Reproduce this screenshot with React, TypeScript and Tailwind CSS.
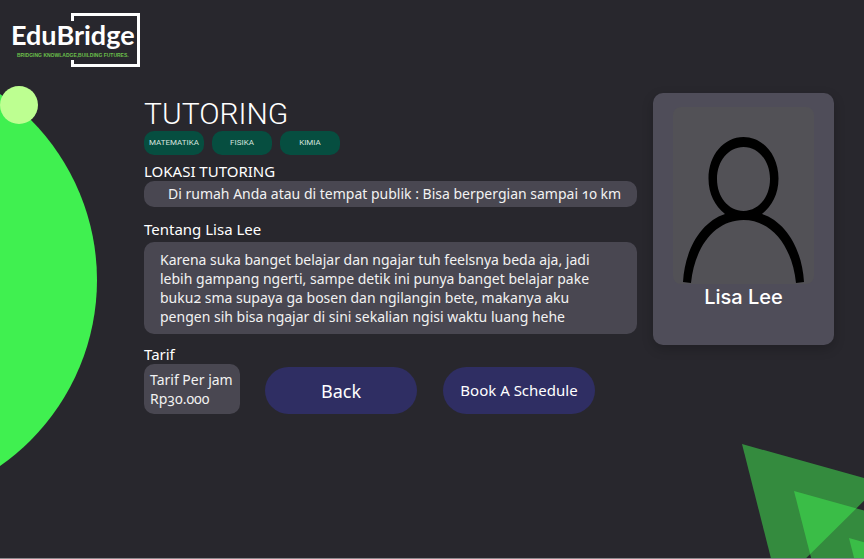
import React from "react";

const subjects = ["MATEMATIKA", "FISIKA", "KIMIA"];

function Logo() {
  return (
    <a href="#home" aria-label="EduBridge" className="relative block h-[54px] w-[129px]">
      <svg
        className="absolute inset-0 h-full w-full"
        viewBox="0 0 129 54"
        fill="none"
        stroke="#ffffff"
        strokeWidth="3"
        aria-hidden="true"
      >
        <path d="M61.500 8V1.500H127.500V52.500H61.500V47" />
      </svg>
      <span className="absolute left-0 top-2 font-['Lato',sans-serif] text-[27px] font-bold leading-[28px]">
        EduBridge
      </span>
      <span className="absolute left-[6px] top-[39px] whitespace-nowrap font-['Liberation_Sans',sans-serif] text-[5px] font-bold leading-[6px] text-[#6abf4b]">
        BRIDGING KNOWLADGE,BUILDING FUTURES.
      </span>
    </a>
  );
}

function Backdrop() {
  return (
    <div aria-hidden="true" className="pointer-events-none absolute inset-0 overflow-hidden">
      <div className="absolute -left-[357px] top-[53px] size-[454px] rounded-full bg-[#40f050]" />
      <div className="absolute left-0 top-[86px] size-[38px] rounded-full bg-[#bdff91]" />
      <svg
        className="absolute bottom-0 right-0"
        width="124"
        height="115"
        viewBox="740 443 124 115"
        fill="#40f050"
        fillOpacity="0.5"
      >
        <path d="M742 444L882 483L778 586Z" />
        <path d="M794 491L934 530L830 632Z" />
        <path d="M849 538L990 577L885 680Z" />
      </svg>
    </div>
  );
}

function ProfileCard() {
  return (
    <aside className="flex h-[252px] w-[181px] shrink-0 flex-col items-center rounded-[10px] bg-[#4f4d59] pt-[14px] shadow-[0_4px_12px_rgba(0,0,0,0.2)]">
      <div className="h-[177px] w-[141px] rounded-lg bg-[#525156]">
        <svg
          viewBox="0 0 141 177"
          className="h-full w-full"
          role="img"
          aria-label="Lisa Lee"
        >
          <path
            fill="#000000"
            fillRule="evenodd"
            d="M70.500 30C90 30 105.500 48 105.500 71.500C105.500 87 99 99 89 107C113 115 129 142 131 175L123 176C119 138 98 113 70.500 113C43 113 22 138 18 176L10 175C12 142 28 115 52 107C42 99 35.500 87 35.500 71.500C35.500 48 51 30 70.500 30ZM70.500 40C55.500 40 44 54 44 72C44 90 55.500 104 70.500 104C85.500 104 97 90 97 72C97 54 85.500 40 70.500 40Z"
          />
        </svg>
      </div>
      <h2 className="font-['Inter',sans-serif] text-xl font-medium leading-[26px]">Lisa Lee</h2>
    </aside>
  );
}

export default function App() {
  return (
    <div className="relative flex min-h-screen flex-col border-b border-[#8c8a8f] bg-[#28272d] font-['Noto_Sans',sans-serif] text-white">
      <Backdrop />
      <header className="relative pl-[11px] pt-[13px]">
        <Logo />
      </header>
      <main className="relative flex items-start gap-4 pl-36 pr-[30px] pt-[26px]">
        <div className="min-w-0 flex-1 text-sm oldstyle-nums">
          <h1 className="pt-1 font-['Roboto',sans-serif] text-[30px] font-light leading-[34px]">
            TUTORING
          </h1>
          <ul className="flex gap-2">
            {subjects.map((subject) => (
              <li
                key={subject}
                className="flex h-6 w-[60px] items-center justify-center rounded-[10px] bg-[#064e40] font-['Roboto',sans-serif] text-[8px] text-[#d5e3df]"
              >
                {subject}
              </li>
            ))}
          </ul>
          <section className="pt-[6px]">
            <h2 className="text-[15px] leading-5">LOKASI TUTORING</h2>
            <p className="rounded-[10px] bg-[#494751] pl-6 leading-[26px] text-[#f2f2f2]">
              Di rumah Anda atau di tempat publik : Bisa berpergian sampai 10 km
            </p>
          </section>
          <section className="pt-3">
            <h2 className="pb-[3px] text-[15px] leading-5">Tentang Lisa Lee</h2>
            <p className="rounded-[10px] bg-[#494751] px-4 py-2 leading-[19px] text-[#f2f2f2]">
              Karena suka banget belajar dan ngajar tuh feelsnya beda aja, jadi
              <br />
              lebih gampang ngerti, sampe detik ini punya banget belajar pake
              <br />
              buku2 sma supaya ga bosen dan ngilangin bete, makanya aku
              <br />
              pengen sih bisa ngajar di sini sekalian ngisi waktu luang hehe
            </p>
          </section>
          <section className="pt-[10px]">
            <h2 className="text-[15px] leading-5">Tarif</h2>
            <div className="flex items-end">
              <p className="w-24 whitespace-nowrap rounded-[10px] bg-[#494751] px-[6px] py-[6px] leading-[19px] text-[#f2f2f2]">
                Tarif Per jam
                <br />
                Rp30.000
              </p>
              <button
                type="button"
                className="ml-[25px] h-[47px] w-[152px] rounded-full bg-[#2f2e63] text-lg"
              >
                Back
              </button>
              <button
                type="button"
                className="ml-[26px] h-[47px] w-[152px] rounded-full bg-[#2f2e63] text-[15px]"
              >
                Book A Schedule
              </button>
            </div>
          </section>
        </div>
        <ProfileCard />
      </main>
    </div>
  );
}
